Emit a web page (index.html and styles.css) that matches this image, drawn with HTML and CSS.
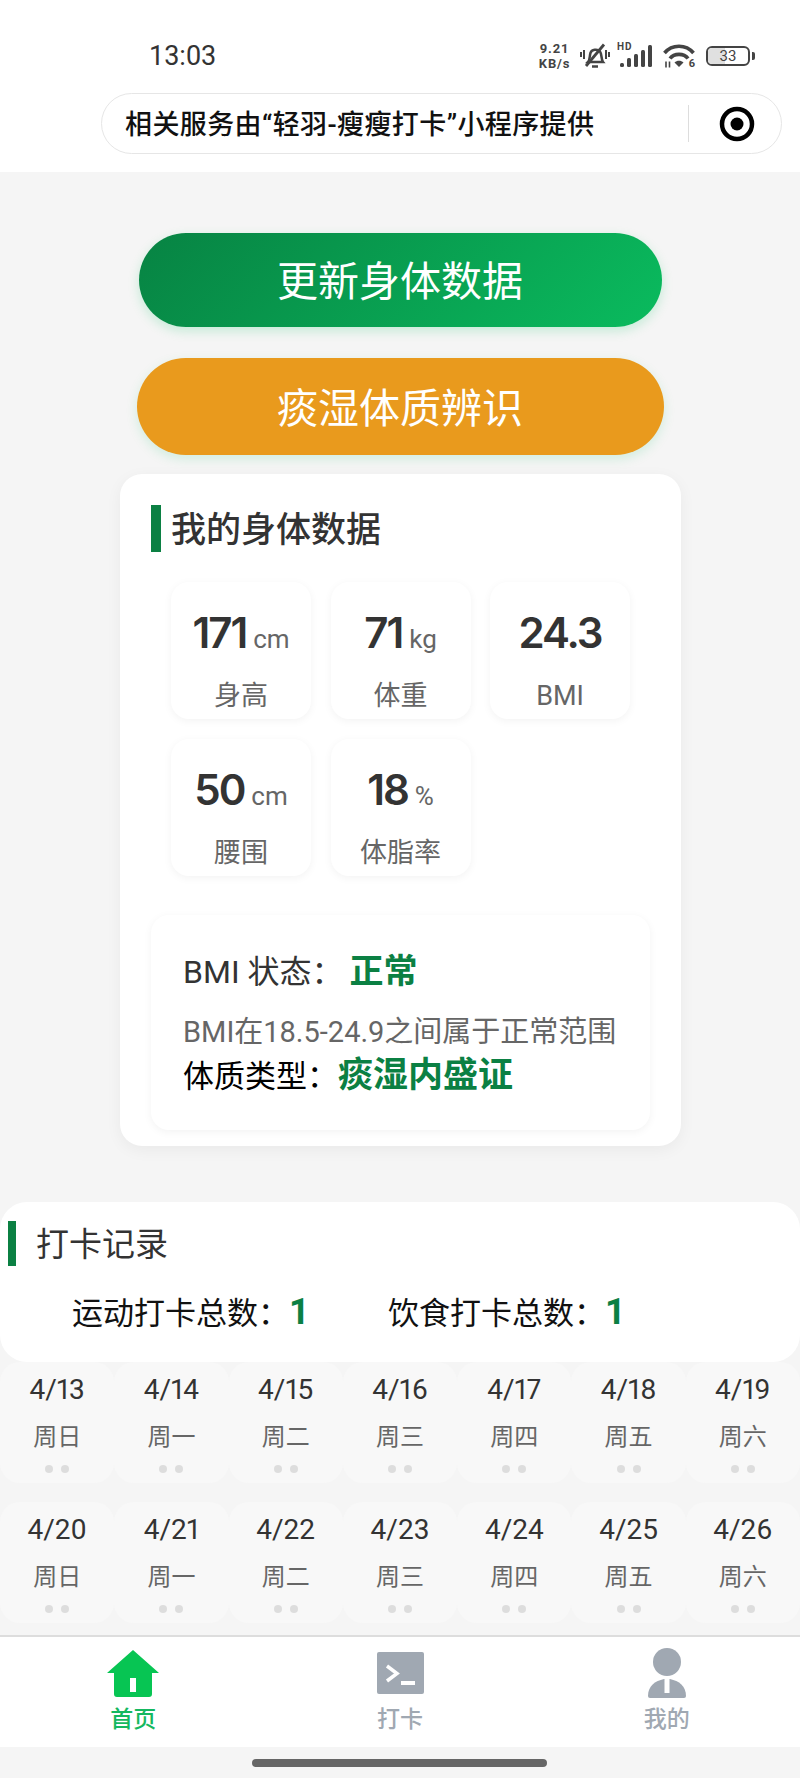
FILE: index.html
```html
<!DOCTYPE html>
<html lang="zh-CN">
<head>
    <meta charset="UTF-8">
    <title>轻羽-瘦瘦打卡</title>
    <link rel="stylesheet" href="styles.css">
</head>
<body>
    <header class="top">
        <div class="status">
            <span class="time">13:03</span>
            <div class="status-icons">
                <div class="speed"><span>9.21</span><span>KB/s</span></div>
                <svg class="bell" width="30" height="26" viewBox="0 0 30 26" fill="none" stroke="#444" stroke-width="2.5">
                    <path d="M8 19c2-2 1.500-6 2.500-9 1-3.500 7-4.500 9.500-1.500 2 2.500 1 8 3 10.500z"/>
                    <path d="M12 23.500h6" stroke-width="2.500"/>
                    <path d="M6 23L24 1.500" stroke-width="2.800"/>
                    <path d="M1 9v5M4 7v9M26 7v9M29 9v5" stroke-width="2"/>
                </svg>
                <div class="signal">
                    <span class="hd">HD</span>
                    <svg width="34" height="22" viewBox="0 0 34 22" fill="#444">
                        <rect x="1" y="18" width="4" height="4" rx="1.500"/>
                        <rect x="8" y="13" width="4" height="9" rx="1.500"/>
                        <rect x="15" y="9" width="4" height="13" rx="1.500"/>
                        <rect x="22" y="5" width="4" height="17" rx="1.500"/>
                        <rect x="29" y="0" width="4" height="22" rx="1.500"/>
                    </svg>
                </div>
                <div class="wifi">
                    <svg width="32" height="24" viewBox="0 0 32 24" fill="none" stroke="#444" stroke-width="3.600">
                        <path d="M1.500 9C9 0 23 0 30.500 9"/>
                        <path d="M7 14.500C11 9 21 9 25 14.500"/>
                        <path d="M11.500 18.500C14 16 18 16 20.500 18.500L16 23z" fill="#444" stroke="none"/>
                        <path d="M3 17.500v6M6.500 17.500v6" stroke-width="1.600"/>
                    </svg>
                    <span class="wifi-num">6</span>
                </div>
                <div class="battery">
                    <div class="battery-fill"></div>
                    <span class="battery-num">33</span>
                </div>
                <div class="battery-nub"></div>
            </div>
        </div>
        <div class="capsule">
            <span class="capsule-text">相关服务由“轻羽-瘦瘦打卡”小程序提供</span>
            <div class="capsule-line"></div>
            <svg class="capsule-icon" width="36" height="36" viewBox="0 0 36 36">
                <circle cx="18" cy="18" r="15" fill="none" stroke="#000" stroke-width="4.500"/>
                <circle cx="18" cy="18" r="6.500" fill="#000"/>
            </svg>
        </div>
    </header>

    <main class="page">
        <div class="btn btn-green">更新身体数据</div>
        <div class="btn btn-orange">痰湿体质辨识</div>

        <section class="card">
            <div class="card-title"><i class="bar"></i><span>我的身体数据</span></div>
            <div class="stats">
                <div class="stat">
                    <div class="stat-value">171<small>cm</small></div>
                    <div class="stat-label">身高</div>
                </div>
                <div class="stat">
                    <div class="stat-value">71<small>kg</small></div>
                    <div class="stat-label">体重</div>
                </div>
                <div class="stat">
                    <div class="stat-value">24.3</div>
                    <div class="stat-label">BMI</div>
                </div>
                <div class="stat">
                    <div class="stat-value">50<small>cm</small></div>
                    <div class="stat-label">腰围</div>
                </div>
                <div class="stat">
                    <div class="stat-value">18<small>%</small></div>
                    <div class="stat-label">体脂率</div>
                </div>
            </div>
            <div class="bmi">
                <div class="bmi-state">BMI 状态<span class="colon">：</span><b>正常</b></div>
                <div class="bmi-desc">BMI在18.5-24.9之间属于正常范围</div>
                <div class="bmi-type">体质类型<span class="colon">：</span><b>痰湿内盛证</b></div>
            </div>
        </section>

        <section class="record">
            <div class="record-title"><i class="bar"></i><span>打卡记录</span></div>
            <div class="totals">
                <div class="total">运动打卡总数<span class="colon">：</span><b>1</b></div>
                <div class="total">饮食打卡总数<span class="colon">：</span><b>1</b></div>
            </div>
        </section>

        <section class="days">
            <div class="day"><div class="date">4/13</div><div class="week">周日</div><div class="dots"><i></i><i></i></div></div>
            <div class="day"><div class="date">4/14</div><div class="week">周一</div><div class="dots"><i></i><i></i></div></div>
            <div class="day"><div class="date">4/15</div><div class="week">周二</div><div class="dots"><i></i><i></i></div></div>
            <div class="day"><div class="date">4/16</div><div class="week">周三</div><div class="dots"><i></i><i></i></div></div>
            <div class="day"><div class="date">4/17</div><div class="week">周四</div><div class="dots"><i></i><i></i></div></div>
            <div class="day"><div class="date">4/18</div><div class="week">周五</div><div class="dots"><i></i><i></i></div></div>
            <div class="day"><div class="date">4/19</div><div class="week">周六</div><div class="dots"><i></i><i></i></div></div>
            <div class="day"><div class="date">4/20</div><div class="week">周日</div><div class="dots"><i></i><i></i></div></div>
            <div class="day"><div class="date">4/21</div><div class="week">周一</div><div class="dots"><i></i><i></i></div></div>
            <div class="day"><div class="date">4/22</div><div class="week">周二</div><div class="dots"><i></i><i></i></div></div>
            <div class="day"><div class="date">4/23</div><div class="week">周三</div><div class="dots"><i></i><i></i></div></div>
            <div class="day"><div class="date">4/24</div><div class="week">周四</div><div class="dots"><i></i><i></i></div></div>
            <div class="day"><div class="date">4/25</div><div class="week">周五</div><div class="dots"><i></i><i></i></div></div>
            <div class="day"><div class="date">4/26</div><div class="week">周六</div><div class="dots"><i></i><i></i></div></div>
        </section>
    </main>

    <nav class="tabs">
        <div class="tab tab-on">
            <div class="tab-icon">
                <svg width="52" height="47" viewBox="0 0 52 47">
                    <path d="M26 0L52 23H45V44a3 3 0 0 1-3 3H10a3 3 0 0 1-3-3V23H0z" fill="#07c553"/>
                    <rect x="23" y="28" width="6" height="14" fill="#fff"/>
                </svg>
            </div>
            <div class="tab-name">首页</div>
        </div>
        <div class="tab">
            <div class="tab-icon">
                <svg width="47" height="42" viewBox="0 0 47 42">
                    <rect width="47" height="42" rx="2" fill="#a0a8b2"/>
                    <path d="M10 14L20 21.500L10 29" fill="none" stroke="#fff" stroke-width="3.500"/>
                    <rect x="24" y="29" width="14" height="4" fill="#fff"/>
                </svg>
            </div>
            <div class="tab-name">打卡</div>
        </div>
        <div class="tab">
            <div class="tab-icon">
                <svg width="38" height="50" viewBox="0 0 38 50">
                    <circle cx="19" cy="14" r="14" fill="#a0a8b2"/>
                    <path d="M0 48C0 38 7 33 16 31H22C31 33 38 38 38 48a2 2 0 0 1-2 2H2a2 2 0 0 1-2-2z" fill="#a0a8b2"/>
                    <rect x="16.500" y="31" width="5" height="14" fill="#fff"/>
                </svg>
            </div>
            <div class="tab-name">我的</div>
        </div>
    </nav>
    <div class="home-bar"><i></i></div>
</body>
</html>
```

FILE: styles.css
```css
*{
    padding: 0;
    margin: 0;
    box-sizing: border-box;
}
body{
    width: 800px;
    height: 1778px;
    overflow: hidden;
    background: #f5f5f5;
    font-family: "Roboto", "Noto Sans CJK SC", sans-serif;
    color: #333;
}
i{
    display: block;
}
b{
    font-weight: 700;
}
.colon{
    font-family: "Noto Sans CJK TC", sans-serif;
}

/* top bar */
.top{
    height: 172px;
    background: #fff;
    padding-top: 36px;
}
.status{
    height: 40px;
    display: flex;
    align-items: center;
    padding-left: 149px;
}
.time{
    font-size: 27px;
    color: #333;
}
.status-icons{
    margin-left: auto;
    padding-right: 45px;
    display: flex;
    align-items: center;
    color: #444;
}
.speed{
    width: 35px;
    display: flex;
    flex-direction: column;
    font-size: 13px;
    line-height: 15.500px;
    letter-spacing: 0.8px;
    font-weight: 700;
    text-align: center;
    white-space: nowrap;
}
.bell{
    margin-left: 8px;
}
.signal{
    position: relative;
    width: 34px;
    height: 22px;
    margin-left: 9px;
}
.hd{
    position: absolute;
    left: -2px;
    top: -3px;
    font-size: 10px;
    letter-spacing: 1px;
    line-height: 10px;
    font-weight: 700;
}
.wifi{
    position: relative;
    width: 32px;
    height: 24px;
    margin-left: 10px;
}
.wifi-num{
    position: absolute;
    right: 0;
    bottom: -1px;
    font-size: 11px;
    line-height: 10px;
    font-weight: 700;
}
.battery{
    position: relative;
    width: 44px;
    height: 20px;
    margin-left: 11px;
    border: 2px solid #444;
    border-radius: 6px;
    overflow: hidden;
}
.battery-fill{
    width: 42%;
    height: 100%;
    background: #e0e0e0;
}
.battery-num{
    position: absolute;
    left: 0;
    right: 0;
    top: 0;
    text-align: center;
    font-size: 15px;
    line-height: 16px;
}
.battery-nub{
    width: 3px;
    height: 8px;
    margin-left: 2px;
    background: #444;
    border-radius: 0 2px 2px 0;
}
.capsule{
    width: 681px;
    height: 61px;
    margin: 17px 0 0 101px;
    border: 1px solid #e6e6e6;
    border-radius: 31px;
    display: flex;
    align-items: center;
    padding-left: 23px;
}
.capsule-text{
    width: 563px;
    margin-bottom: 3px;
    font-size: 27px;
    letter-spacing: 0.4px;
    font-weight: 500;
    color: #111;
    white-space: nowrap;
}
.capsule-line{
    width: 1px;
    height: 37px;
    background: #ddd;
}
.capsule-icon{
    margin-left: 30px;
}

/* page */
.page{
    padding-top: 61px;
}
.btn{
    margin: 0 auto;
    padding-bottom: 4px;
    display: flex;
    align-items: center;
    justify-content: center;
    color: #fff;
    font-size: 41px;
    font-weight: 400;
}
.btn-green{
    width: 523px;
    height: 94px;
    border-radius: 47px;
    background: linear-gradient(135deg, #078343, #0abb5e);
    box-shadow: 0 4px 12px rgba(7, 193, 96, 0.2);
}
.btn-orange{
    width: 527px;
    height: 97px;
    margin-top: 31px;
    border-radius: 49px;
    background: #e99a1d;
    box-shadow: 0 4px 12px rgba(7, 193, 96, 0.15);
}
.card{
    width: 561px;
    height: 672px;
    margin: 19px 0 0 120px;
    padding: 31px 31px 0;
    background: #fff;
    border-radius: 22px;
    box-shadow: 0 4px 16px rgba(0, 0, 0, 0.05);
}
.card-title{
    display: flex;
    align-items: center;
    gap: 10px;
    font-size: 35px;
    line-height: 41px;
    font-weight: 500;
    color: #333;
}
.card-title span{
    margin-top: 3px;
}
.bar{
    width: 10px;
    height: 47px;
    background: #0b8043;
}
.stats{
    margin: 30px 0 0 20px;
    display: grid;
    grid-template-columns: repeat(3, 140px);
    gap: 20px 19.5px;
}
.stat{
    height: 137px;
    padding-top: 26px;
    background: #fff;
    border-radius: 18px;
    box-shadow: 0 2px 8px rgba(0, 0, 0, 0.05);
    text-align: center;
}
.stat-value{
    height: 50px;
    line-height: 50px;
    font-family: "Inter", "Roboto", sans-serif;
    font-size: 42px;
    letter-spacing: -2px;
    font-weight: 600;
    color: #333;
}
.stat-value small{
    margin-left: 7px;
    font-family: "Roboto", sans-serif;
    font-size: 26px;
    letter-spacing: 0;
    font-weight: 400;
    color: #666;
}
.stat-label{
    margin-top: 23px;
    line-height: 30px;
    font-size: 27px;
    color: #666;
}
.bmi{
    width: 499px;
    height: 215px;
    margin-top: 39px;
    padding: 34px 0 0 32px;
    background: #fff;
    border-radius: 18px;
    box-shadow: 0 2px 8px rgba(0, 0, 0, 0.05);
}
.bmi b{
    color: #0b8043;
}
.bmi-state{
    line-height: 40px;
    font-size: 32px;
    color: #333;
}
.bmi-state b{
    margin-left: 6px;
    font-size: 34px;
}
.bmi-desc{
    margin-top: 20px;
    line-height: 40px;
    font-size: 29px;
    color: #666;
    white-space: nowrap;
}
.bmi-type{
    line-height: 44px;
    font-size: 31px;
    color: #000;
}
.bmi-type b{
    font-size: 35px;
}

/* record */
.record{
    height: 160px;
    margin-top: 56px;
    padding: 19px 0 0 8px;
    background: #fff;
    border-radius: 27px;
}
.record-title{
    display: flex;
    align-items: center;
    gap: 20px;
    font-size: 33px;
    line-height: 39px;
    color: #333;
}
.record-title span{
    margin-top: 1px;
}
.record-title .bar{
    width: 8px;
    height: 45px;
}
.totals{
    margin-top: 23px;
    padding-left: 64px;
    display: flex;
}
.total{
    width: 316px;
    line-height: 44px;
    font-size: 31px;
    color: #111;
}
.total b{
    font-size: 36px;
    color: #0b8043;
}
.days{
    display: grid;
    grid-template-columns: repeat(7, 1fr);
    row-gap: 19px;
}
.day{
    height: 121px;
    padding-top: 10px;
    background: #f8f8f8;
    border-radius: 20px;
    text-align: center;
}
.date{
    line-height: 36px;
    font-size: 28px;
    font-variant-numeric: proportional-nums;
    color: #333;
}
.week{
    margin-top: 11px;
    line-height: 36px;
    font-size: 24px;
    color: #666;
}
.dots{
    margin-top: 10px;
    display: flex;
    justify-content: center;
    gap: 8px;
}
.dots i{
    width: 8px;
    height: 8px;
    border-radius: 50%;
    background: #ddd;
}

/* bottom */
.tabs{
    margin-top: 12px;
    height: 112px;
    padding-top: 11px;
    background: #fff;
    border-top: 2px solid #ddd;
    display: flex;
}
.tab{
    flex: 1;
    text-align: center;
}
.tab-icon{
    height: 50px;
    display: flex;
    align-items: center;
    justify-content: center;
}
.tab-name{
    margin-top: 7px;
    line-height: 30px;
    font-size: 23px;
    font-weight: 500;
    color: #a0a8b2;
}
.tab-on .tab-name{
    color: #15b860;
}
.home-bar{
    padding-top: 12px;
}
.home-bar i{
    width: 295px;
    height: 8px;
    margin-left: 252px;
    border-radius: 4px;
    background: #666;
}
```
